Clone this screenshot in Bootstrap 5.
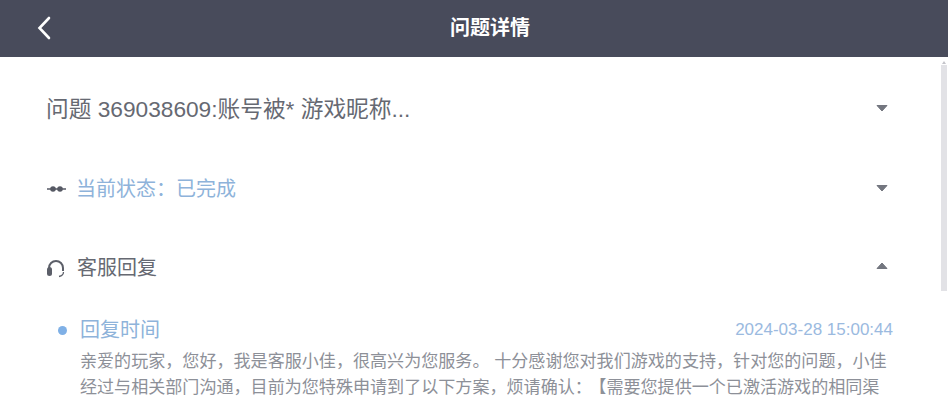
<!DOCTYPE html>
<html lang="zh-CN">
<head>
<meta charset="utf-8">
<title>问题详情</title>
<link href="https://cdn.jsdelivr.net/npm/bootstrap@5.3.0/dist/css/bootstrap.min.css" rel="stylesheet">
<style>
html,body{height:400px;overflow:hidden;background:#fff;}
body{font-family:"Liberation Sans","Noto Sans CJK SC",sans-serif;color:#5f626c;}
.topbar{height:57px;background:#484b5b;padding-left:32px;}
.topbar-title{font-size:20px;line-height:57px;font-weight:700;color:#fff;}
.back-link{left:35px;top:15px;width:18px;height:26px;}
.view{height:343px;overflow:hidden;}
.scroll-rail{right:1px;top:8px;width:6px;height:226px;background:#e2e2e6;}
.scroll-tip{right:2px;top:4px;width:0;height:0;border-left:2px solid transparent;border-right:2px solid transparent;border-bottom:3px solid #c4c4ca;}
.pane{padding:0 60px 0 46px;}
.q-row{height:32px;margin-top:36px;}
.q-title{font-size:22.7px;line-height:32px;color:#666972;}
.status-row{height:28px;margin-top:50px;}
.status-text{font-size:20px;line-height:28px;color:#8eb3da;}
.reply-row{height:28px;margin-top:51px;}
.reply-text{font-size:20px;line-height:28px;color:#666972;}
.ico-slot{width:31px;}
.ico-slot-tight{width:30px;padding-left:1px;}
.caret-ico{width:12px;height:8px;display:block;margin-bottom:3px;}
.caret-up{margin-bottom:4px;}
.time-row{margin-top:34px;height:28px;padding-left:12px;margin-right:-5px;}
.dot-ico{width:9px;height:9px;border-radius:50%;background:#7fb0e6;margin-right:13px;}
.time-label{font-size:20px;line-height:28px;color:#8eb3da;}
.time-val{font-size:17px;line-height:28px;color:#9bbadf;}
.reply-body{margin:5px 0 0 34px;width:812px;font-size:17.07px;line-height:26px;color:#8d9098;font-feature-settings:"chws" 0;}
.bracket-gap{margin-left:6px;}
</style>
</head>
<body>
<header class="topbar position-relative text-center">
  <a class="back-link position-absolute d-block" href="#" aria-label="返回">
    <svg width="18" height="26" viewBox="0 0 18 26"><path d="M14 3 4.500 13 14 23" fill="none" stroke="#fff" stroke-width="2.600" stroke-linecap="round" stroke-linejoin="miter"/></svg>
  </a>
  <div class="topbar-title">问题详情</div>
</header>
<main class="view position-relative">
  <div class="scroll-tip position-absolute"></div>
  <div class="scroll-rail position-absolute"></div>
  <div class="pane">
    <div class="q-row d-flex align-items-center justify-content-between">
      <div class="q-title">问题 369038609:账号被* 游戏昵称...</div>
      <svg class="caret-ico" viewBox="0 0 12 8"><path d="M1 1.500h10L6 7z" fill="#73767f" stroke="#73767f" stroke-linejoin="round"/></svg>
    </div>
    <div class="status-row d-flex align-items-center justify-content-between">
      <div class="d-flex align-items-center">
        <div class="ico-slot-tight d-flex">
          <svg width="19" height="8" viewBox="0 0 19 8"><path d="M0 4h19" stroke="#565964" stroke-width="1.500"/><circle cx="6" cy="4" r="2.800" fill="#565964"/><circle cx="13" cy="4" r="2.800" fill="#565964"/></svg>
        </div>
        <div class="status-text">当前状态&#xFF1A;已完成</div>
      </div>
      <svg class="caret-ico" viewBox="0 0 12 8"><path d="M1 1.500h10L6 7z" fill="#73767f" stroke="#73767f" stroke-linejoin="round"/></svg>
    </div>
    <div class="reply-row d-flex align-items-center justify-content-between">
      <div class="d-flex align-items-center">
        <div class="ico-slot d-flex">
          <svg width="20" height="19" viewBox="0 0 20 19"><path d="M3 11V9a7 7 0 0 1 14 0v3" fill="none" stroke="#5c5f69" stroke-width="2"/><path d="M17.500 13c0 2.500-2 4-4.500 4.500" fill="none" stroke="#5c5f69" stroke-width="1.300"/><rect x="1" y="8" width="5" height="9" rx="2.500" fill="#5c5f69"/></svg>
        </div>
        <div class="reply-text">客服回复</div>
      </div>
      <svg class="caret-ico caret-up" viewBox="0 0 12 8"><path d="M1 6.500h10L6 1z" fill="#73767f" stroke="#73767f" stroke-linejoin="round"/></svg>
    </div>
    <div class="time-row d-flex align-items-center justify-content-between">
      <div class="d-flex align-items-center">
        <span class="dot-ico"></span>
        <span class="time-label">回复时间</span>
      </div>
      <span class="time-val">2024-03-28 15:00:44</span>
    </div>
    <p class="reply-body">亲爱的玩家&#xFF0C;您好&#xFF0C;我是客服小佳&#xFF0C;很高兴为您服务。 十分感谢您对我们游戏的支持&#xFF0C;针对您的问题&#xFF0C;小佳经过与相关部门沟通&#xFF0C;目前为您特殊申请到了以下方案&#xFF0C;烦请确认&#xFF1A;<span class="bracket-gap">【</span>需要您提供一个已激活游戏的相同渠</p>
  </div>
</main>
<script src="https://cdn.jsdelivr.net/npm/bootstrap@5.3.0/dist/js/bootstrap.bundle.min.js"></script>
</body>
</html>
